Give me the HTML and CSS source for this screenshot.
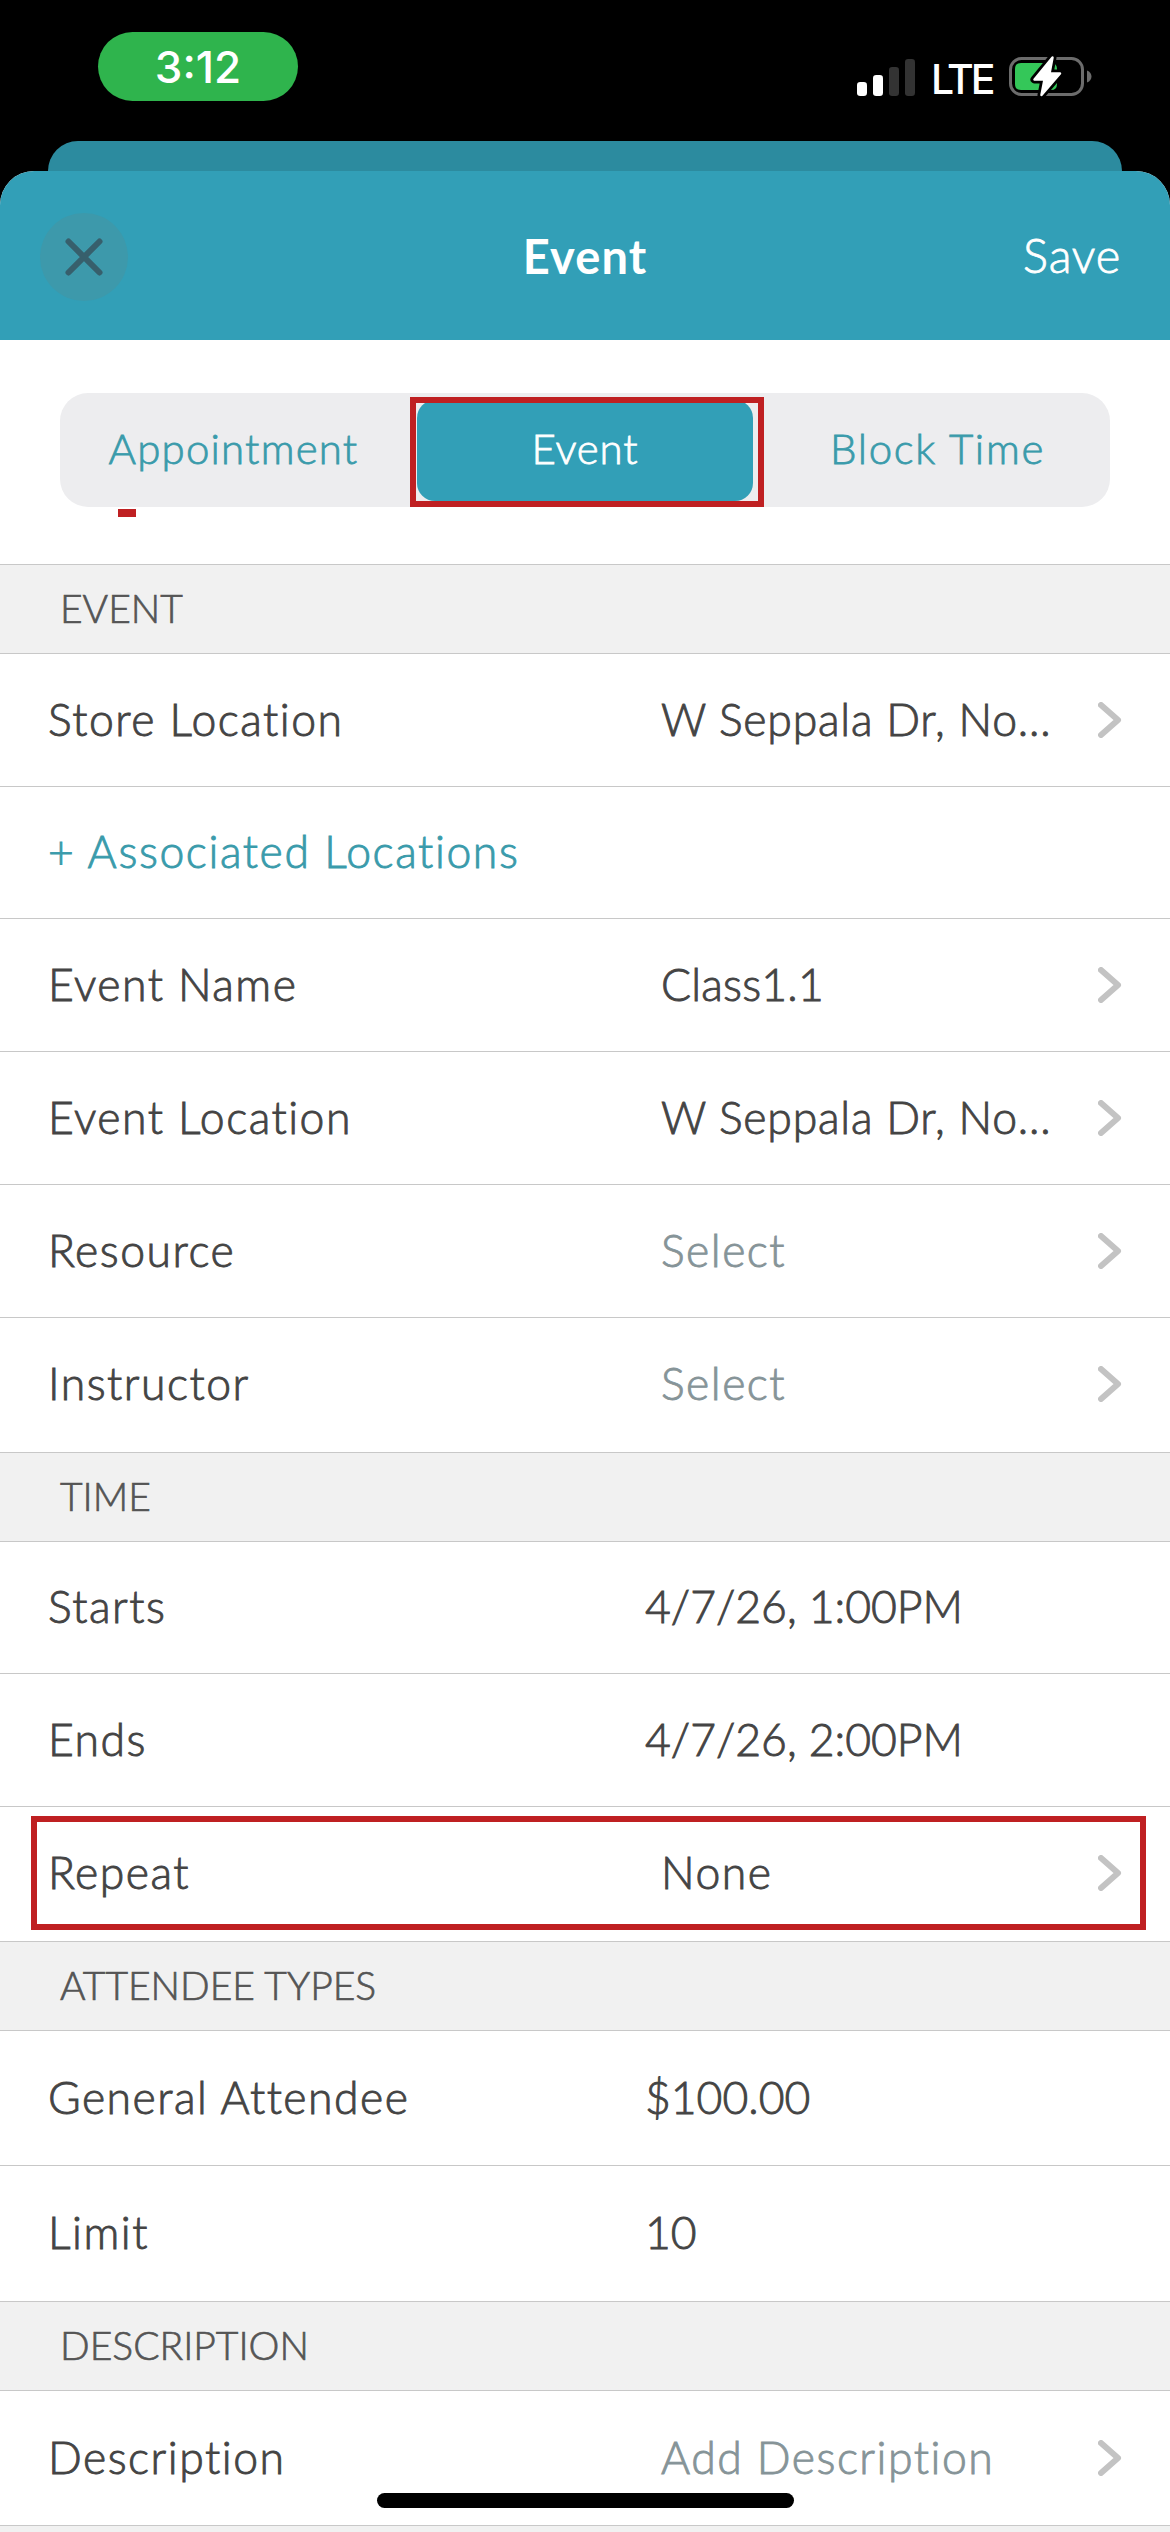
FILE: index.html
```html
<!DOCTYPE html>
<html lang="en">
<head>
<meta charset="utf-8">
<title>Event</title>
<link rel="stylesheet" href="styles.css">
</head>
<body>
<svg class="defs" width="0" height="0"><symbol id="chevron" viewBox="0 0 24 36"><path d="M3 3 L20 18 L3 33"/></symbol></svg>
<div class="screen">
  <div class="status">
    <div class="clock">3:12</div>
    <div class="indicators">
      <svg class="signal" width="58" height="40" viewBox="0 0 58 40">
        <rect x="0" y="24" width="10" height="14" rx="3.2" fill="#fff"/>
        <rect x="16" y="17" width="10" height="21" rx="3.2" fill="#fff"/>
        <rect x="32" y="9" width="10" height="29" rx="3.2" fill="#333"/>
        <rect x="48" y="1" width="10" height="37" rx="3.2" fill="#333"/>
      </svg>
      <span class="network">LTE</span>
      <svg class="battery" width="84" height="44" viewBox="0 0 84 44">
        <rect x="1.5" y="3.5" width="72" height="36" rx="11" fill="none" stroke="#6c6c6c" stroke-width="3"/>
        <path d="M78 15.500 C84 17.500 84 25.500 78 27.500Z" fill="#6c6c6c"/>
        <path d="M12 8 H42 Q48 8 48 14 V29 Q48 35 42 35 H12 Q6 35 6 29 V14 Q6 8 12 8Z" fill="#34c759"/>
        <path d="M43.500 2.500 L25.500 24.500 H35.500 L32.500 40 L51 18.500 H40.500Z" fill="#000" stroke="#000" stroke-width="8" stroke-linejoin="round"/>
        <path d="M43.500 2.500 L25.500 24.500 H35.500 L32.500 40 L51 18.500 H40.500Z" fill="#fff" stroke="#fff" stroke-width="2.500" stroke-linejoin="round"/>
      </svg>
    </div>
  </div>
  <div class="sheet-behind"></div>
  <main class="sheet">
    <header class="navbar">
      <button class="close" aria-label="Close"><svg width="42" height="42" viewBox="0 0 42 42"><path d="M5.500 5.500 L36.500 36.500 M36.500 5.500 L5.500 36.500"/></svg></button>
      <h1 class="title">Event</h1>
      <button class="save">Save</button>
    </header>
    <div class="switcher">
      <div class="segments">
        <button class="segment">Appointment</button>
        <button class="segment active">Event</button>
        <button class="segment block">Block Time</button>
        <i class="mark mark-tab"></i>
        <i class="mark-dash"></i>
      </div>
    </div>

    <h2 class="section">EVENT</h2>
    <div class="row"><span class="label">Store Location</span><span class="value long">W Seppala Dr, No...</span><svg class="chevron"><use href="#chevron"/></svg></div>
    <div class="row h132"><span class="label link">+ Associated Locations</span></div>
    <div class="row"><span class="label">Event Name</span><span class="value name">Class1.1</span><svg class="chevron"><use href="#chevron"/></svg></div>
    <div class="row"><span class="label">Event Location</span><span class="value long">W Seppala Dr, No...</span><svg class="chevron"><use href="#chevron"/></svg></div>
    <div class="row"><span class="label">Resource</span><span class="value empty">Select</span><svg class="chevron"><use href="#chevron"/></svg></div>
    <div class="row h134"><span class="label">Instructor</span><span class="value empty">Select</span><svg class="chevron"><use href="#chevron"/></svg></div>

    <h2 class="section">TIME</h2>
    <div class="row h132"><span class="label">Starts</span><span class="value plain">4/7/26, 1:00PM</span></div>
    <div class="row"><span class="label">Ends</span><span class="value plain">4/7/26, 2:00PM</span></div>
    <div class="row h134"><span class="label">Repeat</span><span class="value">None</span><svg class="chevron"><use href="#chevron"/></svg><i class="mark mark-row"></i></div>

    <h2 class="section">ATTENDEE TYPES</h2>
    <div class="row h135"><span class="label">General Attendee</span><span class="value plain">$100.00</span></div>
    <div class="row h135"><span class="label">Limit</span><span class="value plain">10</span></div>

    <h2 class="section">DESCRIPTION</h2>
    <div class="row h135"><span class="label">Description</span><span class="value empty">Add Description</span><svg class="chevron"><use href="#chevron"/></svg></div>
    <div class="tail"></div>
  </main>
  <div class="home-indicator"></div>
</div>
</body>
</html>
```
FILE: styles.css
```css
* { box-sizing: border-box; }

body {
  margin: 0;
  background: #000;
  font-family: Lato, "Open Sans", sans-serif;
  font-weight: 300;
  color: #444;
}

button {
  margin: 0;
  padding: 0;
  border: 0;
  background: none;
  font: inherit;
  letter-spacing: inherit;
}

.defs { position: absolute; }

.screen {
  position: relative;
  display: flex;
  flex-direction: column;
  width: 1170px;
  height: 2532px;
  overflow: hidden;
  background: #000;
}

.status {
  display: flex;
  justify-content: space-between;
  height: 141px;
  padding: 32px 77px 0 98px;
  font-family: Inter, "Liberation Sans", sans-serif;
  color: #fff;
}

.clock {
  width: 200px;
  height: 69px;
  border-radius: 35px;
  background: #2fb44d;
  font-size: 44px;
  font-weight: 500;
  line-height: 70px;
  text-align: center;
}

.indicators {
  display: flex;
  align-items: flex-start;
  padding-top: 26px;
}

.network {
  width: 61px;
  margin: 0 17px 0 16px;
  font-size: 41px;
  font-weight: 500;
  line-height: 43px;
  letter-spacing: -3.2px;
}

.battery { margin-top: -3px; }

.sheet-behind {
  height: 30px;
  margin: 0 48px;
  border-radius: 30px 30px 0 0;
  background: #2c8b9f;
}

.sheet {
  flex: 1;
  border-radius: 34px 34px 0 0;
  background: #fff;
  overflow: hidden;
}

.navbar {
  display: grid;
  grid-template-columns: 1fr auto 1fr;
  align-items: center;
  height: 169px;
  padding: 3px 49px 0 40px;
  background: #329fb7;
  color: #fff;
  font-size: 47px;
}

.close {
  display: flex;
  align-items: center;
  justify-content: center;
  width: 88px;
  height: 88px;
  border-radius: 50%;
  background: #3d99ab;
}

.close path {
  fill: none;
  stroke: #375f6c;
  stroke-width: 6;
  stroke-linecap: round;
}

.title {
  margin: 0 -6px 3px 3px;
  font-size: 47px;
  font-weight: 700;
  letter-spacing: 1.1px;
}

.save {
  justify-self: end;
  margin-bottom: 4px;
  color: #fff;
  letter-spacing: 0.8px;
  -webkit-text-stroke: 0.8px;
}

.switcher {
  height: 224px;
  padding: 53px 60px 0;
}

.segments {
  position: relative;
  display: grid;
  grid-template-columns: 1fr 336px 1fr;
  height: 114px;
  padding: 7px 0 6px;
  border-radius: 28px;
  background: #ededef;
}

.segment {
  padding: 0 10px 5px 0;
  color: #3a9bab;
  font-size: 42px;
  letter-spacing: 1.2px;
  -webkit-text-stroke: 0.8px;
}

.segment.active {
  padding-right: 0;
  border-radius: 18px;
  background: #329fb7;
  color: #fff;
  letter-spacing: 0.8px;
}

.segment.block {
  padding: 0 0 5px 12px;
  letter-spacing: 1.7px;
}

.mark {
  position: absolute;
  border: 6px solid #bf2022;
}

.mark-tab {
  left: 350px;
  top: 4px;
  width: 354px;
  height: 110px;
}

.mark-dash {
  position: absolute;
  left: 58px;
  top: 116px;
  width: 18px;
  height: 8px;
  background: #bf2022;
}

.mark-row {
  left: 31px;
  top: 9px;
  width: 1115px;
  height: 114px;
}

.section {
  height: 90px;
  margin: 0;
  padding-left: 60px;
  border-top: 1px solid #c8c8c8;
  border-bottom: 1px solid #c8c8c8;
  background: #f1f1f1;
  color: #555;
  font-size: 39px;
  font-weight: 300;
  line-height: 87px;
  -webkit-text-stroke: 0.7px;
}

.row {
  position: relative;
  display: flex;
  align-items: center;
  height: 133px;
  padding: 0 48px;
  border-bottom: 1px solid #c8c8c8;
  font-size: 44.500px;
  letter-spacing: 1.5px;
  white-space: pre;
  -webkit-text-stroke: 0.9px;
}

.row:has(+ .section) { border-bottom: 0; }

.h132 { height: 132px; }
.h134 { height: 134px; padding-bottom: 2px; }
.h135 { height: 135px; }

.label {
  flex: 0 0 613px;
  padding-bottom: 4px;
}

.link {
  color: #3a9bab;
  letter-spacing: 1.6px;
}

.value {
  flex: 1;
  padding-bottom: 4px;
}

.value.long { letter-spacing: 0.8px; }
.value.name { letter-spacing: 0.2px; }

.value.plain {
  margin-left: -16px;
  letter-spacing: 0;
}

.empty { color: #869498; }

.chevron {
  width: 24px;
  height: 36px;
  fill: none;
  stroke: #c3c3c3;
  stroke-width: 6;
  stroke-linecap: round;
  stroke-linejoin: round;
}

.tail {
  height: 20px;
  background: #f1f1f1;
}

.home-indicator {
  position: absolute;
  left: 377px;
  top: 2493px;
  width: 417px;
  height: 15px;
  border-radius: 8px;
  background: #000;
}
```
